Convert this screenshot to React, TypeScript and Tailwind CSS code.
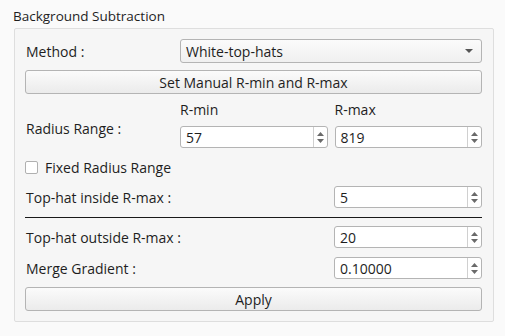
import React from "react";

const font = { fontFamily: '"Open Sans", "Noto Sans", "DejaVu Sans", sans-serif' };

function Spin({ value }: { value: string }) {
  return (
    <div className="flex h-[22px] w-full rounded-[3px] border border-[#b4b4b4] bg-white">
      <div className="flex flex-1 items-center pl-[5px] text-[14px] text-[#1e1e1e]">{value}</div>
      <div className="flex w-[14px] flex-col items-center justify-center gap-[3px] border-l border-[#d0d0d0]">
        <svg width="7" height="4" viewBox="0 0 7 4"><path d="M0 4 L3.5 0 L7 4 Z" fill="#6a6a6a" /></svg>
        <svg width="7" height="4" viewBox="0 0 7 4"><path d="M0 0 L3.5 4 L7 0 Z" fill="#6a6a6a" /></svg>
      </div>
    </div>
  );
}

function Btn({ children }: { children: React.ReactNode }) {
  return (
    <div className="flex h-[24px] items-center justify-center rounded-[3px] border border-[#b4b4b4] bg-gradient-to-b from-[#fbfbfb] to-[#ebebeb] text-[14px] text-[#1e1e1e]">
      {children}
    </div>
  );
}

export default function App() {
  return (
    <div className="h-[336px] w-[505px] bg-[#fafafa] text-[#1e1e1e]" style={font}>
      <div className="pl-[13px] pt-[7px] text-[13.5px] leading-[18px]">Background Subtraction</div>
      <div className="ml-[14px] mt-[3px] flex h-[294px] w-[480px] flex-col rounded-[2px] border border-[#dedede] bg-[#f6f6f6] pl-[10px] pr-[11px] pt-[10px] text-[14px]">
        <div className="flex h-[24px] items-center">
          <div className="w-[155px] pl-[1px]">Method :</div>
          <div className="flex h-[24px] flex-1 items-center justify-between rounded-[3px] border border-[#b4b4b4] bg-gradient-to-b from-[#fbfbfb] to-[#f0f0f0] pl-[5px] pr-[8px]">
            <span>White-top-hats</span>
            <svg width="8" height="4" viewBox="0 0 8 4"><path d="M0 0 L4 4 L8 0 Z" fill="#555" /></svg>
          </div>
        </div>
        <div className="mt-[7px]">
          <Btn>Set Manual R-min and R-max</Btn>
        </div>
        <div className="mt-[7px] flex">
          <div className="flex w-[155px] items-center pl-[1px] pt-[7px]">Radius Range :</div>
          <div className="flex flex-1 gap-[7px]">
            <div className="flex flex-1 flex-col">
              <div className="h-[18px] leading-[18px]">R-min</div>
              <div className="mt-[7px]"><Spin value="57" /></div>
            </div>
            <div className="flex flex-1 flex-col">
              <div className="h-[18px] leading-[18px]">R-max</div>
              <div className="mt-[7px]"><Spin value="819" /></div>
            </div>
          </div>
        </div>
        <div className="mt-[13px] flex h-[13px] items-center">
          <div className="h-[13px] w-[13px] rounded-[2px] border border-[#b0b0b0] bg-white"></div>
          <span className="ml-[7px]">Fixed Radius Range</span>
        </div>
        <div className="mt-[12px] flex h-[22px] items-center">
          <div className="flex-1 pl-[1px]">Top-hat inside R-max :</div>
          <div className="w-[148px]"><Spin value="5" /></div>
        </div>
        <div className="mt-[9px] h-px bg-[#1a1a1a]"></div>
        <div className="mt-[8px] flex h-[22px] items-center">
          <div className="flex-1 pl-[1px]">Top-hat outside R-max :</div>
          <div className="w-[148px]"><Spin value="20" /></div>
        </div>
        <div className="mt-[9px] flex h-[22px] items-center">
          <div className="flex-1 pl-[1px]">Merge Gradient :</div>
          <div className="w-[148px]"><Spin value="0.10000" /></div>
        </div>
        <div className="mt-[8px]">
          <Btn>Apply</Btn>
        </div>
      </div>
    </div>
  );
}
